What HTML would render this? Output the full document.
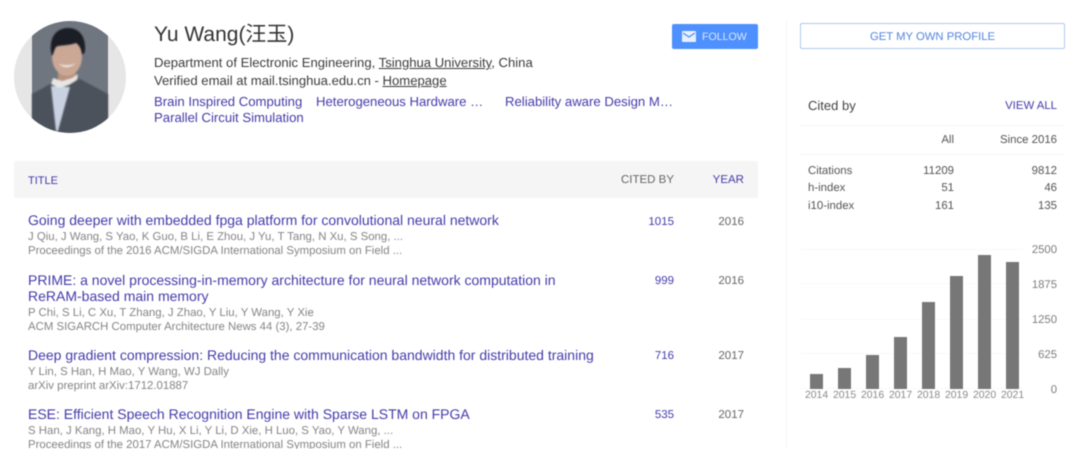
<!DOCTYPE html>
<html><head><meta charset="utf-8">
<style>
html,body{margin:0;padding:0;background:#fff}
#p{position:relative;width:1080px;height:449px;overflow:hidden;background:#fff;font-family:"Liberation Sans","Noto Sans CJK SC",sans-serif;filter:blur(.4px);text-rendering:geometricPrecision}
#p div.t{position:absolute;white-space:nowrap;line-height:16px;height:16px}
.l{color:#453baa}
.g{color:#858585;font-size:11.4px}
.r{text-align:right}
.h{font-size:14px;color:#453baa}
.s{font-size:11.4px;color:#555}
.y{font-size:10.4px;color:#8a8a8a}
.a{font-size:11.3px;color:#7d7d7d}
.kw{font-size:13.15px}
</style></head><body><div id="p">

<svg style="position:absolute;left:14px;top:21px" width="112" height="112" viewBox="0 0 112 112">
<defs><clipPath id="c"><circle cx="56" cy="56" r="56"/></clipPath></defs>
<g clip-path="url(#c)">
<rect width="112" height="112" fill="#e6e6e6"/>
<rect x="18" y="0" width="76" height="112" fill="#6f7680"/>
<g style="filter:blur(.8px)">
<rect x="44" y="48" width="18" height="14" fill="#b8937f"/>
<path d="M18 73 L38 62 L66 58 L94 73 L94 112 L18 112Z" fill="#4c525b"/>
<path d="M37 65 L56 66 L44 110 L42 110Z" fill="#c9d2e2"/>
<path d="M39 57 L37 63 L45 67 L55 64 L63 59 L64 53 L58 57 L48 60Z" fill="#e8e6e4"/>
<ellipse cx="53" cy="36" rx="15" ry="19" fill="#cba895"/>
<path d="M37 31 C35 12 46 7 54 7 C66 7 72 16 71 30 C70 33 69 34 68 33 C67 27 65 24 62 22 C54 25 44 24 42 26 C40 29 40 32 38 35Z" fill="#1b1e25"/>
<path d="M45 43 Q53 50 62 42 Q54 46 45 43Z" fill="#f1ece7"/>
</g>
</g></svg>

<div class="t" style="left:154px;top:23px;font-size:21px;line-height:24px;height:24px;color:#333">Yu Wang(汪玉)</div>
<div class="t" style="left:154px;top:55px;font-size:13.1px;color:#3c3c3c">Department of Electronic Engineering, <u>Tsinghua University</u>, China</div>
<div class="t" style="left:154px;top:73px;font-size:13.1px;color:#3c3c3c">Verified email at mail.tsinghua.edu.cn - <u>Homepage</u></div>
<div class="t l kw" style="left:154px;top:94px">Brain Inspired Computing</div>
<div class="t l kw" style="left:316px;top:94px">Heterogeneous Hardware …</div>
<div class="t l kw" style="left:505px;top:94px">Reliability aware Design M…</div>
<div class="t l kw" style="left:154px;top:110px">Parallel Circuit Simulation</div>

<div style="position:absolute;left:672px;top:24px;width:86px;height:25px;background:#4d90fe;border-radius:2px"></div>
<svg style="position:absolute;left:682px;top:31px" width="14" height="11" viewBox="0 0 14 11"><rect width="14" height="11" rx="1" fill="#e8f0fe"/><path d="M1 2 L7 6 L13 2" fill="none" stroke="#4d90fe" stroke-width="1.3"/></svg>
<div class="t" style="left:702px;top:29px;font-size:10.6px;color:#dbe8fd">FOLLOW</div>

<div style="position:absolute;left:786px;top:20px;width:1px;height:429px;background:#f5f5f5"></div>
<div style="position:absolute;left:800px;top:23px;width:263px;height:24px;border:1px solid #aec6f3;border-radius:2px"></div>
<div class="t" style="left:800px;top:29px;width:265px;text-align:center;font-size:11.3px;color:#5585dc">GET MY OWN PROFILE</div>

<div class="t" style="left:808px;top:98px;font-size:13px;color:#444">Cited by</div>
<div class="t r l" style="right:23px;top:98px;font-size:11.4px">VIEW ALL</div>
<div style="position:absolute;left:800px;top:125px;width:265px;height:1px;background:#f6f6f6"></div>
<div class="t r s" style="right:126px;top:132px">All</div>
<div class="t r s" style="right:23px;top:132px">Since 2016</div>
<div style="position:absolute;left:800px;top:154px;width:265px;height:1px;background:#f6f6f6"></div>

<div class="t s" style="left:808px;top:163px">Citations</div><div class="t r s" style="right:126px;top:163px">11209</div><div class="t r s" style="right:23px;top:163px">9812</div>
<div class="t s" style="left:808px;top:180px">h-index</div><div class="t r s" style="right:126px;top:180px">51</div><div class="t r s" style="right:23px;top:180px">46</div>
<div class="t s" style="left:808px;top:198px">i10-index</div><div class="t r s" style="right:126px;top:198px">161</div><div class="t r s" style="right:23px;top:198px">135</div>

<svg style="position:absolute;left:0;top:0" width="1080" height="449">
<g fill="#f8f8f8"><rect x="800" y="249" width="223" height="1"/><rect x="800" y="283" width="223" height="1"/><rect x="800" y="319" width="223" height="1"/><rect x="800" y="353" width="223" height="1"/><rect x="800" y="388" width="223" height="1"/></g>
<g fill="#777">
<rect x="810" y="374" width="13" height="15"/>
<rect x="838" y="368" width="13" height="21"/>
<rect x="866" y="355" width="13" height="34"/>
<rect x="894" y="337" width="13" height="52"/>
<rect x="922" y="302" width="13" height="87"/>
<rect x="950" y="276" width="13" height="113"/>
<rect x="978" y="255" width="13" height="134"/>
<rect x="1006" y="262" width="13" height="127"/>
</g></svg>
<div class="t y" style="left:805px;top:388px">2014</div>
<div class="t y" style="left:833px;top:388px">2015</div>
<div class="t y" style="left:861px;top:388px">2016</div>
<div class="t y" style="left:889px;top:388px">2017</div>
<div class="t y" style="left:917px;top:388px">2018</div>
<div class="t y" style="left:945px;top:388px">2019</div>
<div class="t y" style="left:973px;top:388px">2020</div>
<div class="t y" style="left:1001px;top:388px">2021</div>
<div class="t r a" style="right:23px;top:242px">2500</div>
<div class="t r a" style="right:23px;top:277px">1875</div>
<div class="t r a" style="right:23px;top:312px">1250</div>
<div class="t r a" style="right:23px;top:347px">625</div>
<div class="t r a" style="right:23px;top:382px">0</div>

<div style="position:absolute;left:14px;top:161px;width:744px;height:37px;background:#f5f5f5;border-radius:2px"></div>
<div class="t l" style="left:28px;top:173px;font-size:11px">TITLE</div>
<div class="t r" style="right:406px;top:172px;font-size:11.5px;color:#666">CITED BY</div>
<div class="t r l" style="right:336px;top:172px;font-size:11.5px">YEAR</div>

<div class="t h" style="left:28px;top:212px">Going deeper with embedded fpga platform for convolutional neural network</div>
<div class="t g" style="left:28px;top:229px">J Qiu, J Wang, S Yao, K Guo, B Li, E Zhou, J Yu, T Tang, N Xu, S Song, ...</div>
<div class="t g" style="left:28px;top:243px">Proceedings of the 2016 ACM/SIGDA International Symposium on Field ...</div>
<div class="t r l" style="right:406px;top:214px;font-size:11.5px">1015</div>
<div class="t r" style="right:336px;top:214px;font-size:11.5px;color:#666">2016</div>

<div class="t h" style="left:28px;top:272px">PRIME: a novel processing-in-memory architecture for neural network computation in</div>
<div class="t h" style="left:28px;top:288px">ReRAM-based main memory</div>
<div class="t g" style="left:28px;top:305px">P Chi, S Li, C Xu, T Zhang, J Zhao, Y Liu, Y Wang, Y Xie</div>
<div class="t g" style="left:28px;top:319px">ACM SIGARCH Computer Architecture News 44 (3), 27-39</div>
<div class="t r l" style="right:406px;top:273px;font-size:11.5px">999</div>
<div class="t r" style="right:336px;top:273px;font-size:11.5px;color:#666">2016</div>

<div class="t h" style="left:28px;top:347px">Deep gradient compression: Reducing the communication bandwidth for distributed training</div>
<div class="t g" style="left:28px;top:364px">Y Lin, S Han, H Mao, Y Wang, WJ Dally</div>
<div class="t g" style="left:28px;top:378px">arXiv preprint arXiv:1712.01887</div>
<div class="t r l" style="right:406px;top:348px;font-size:11.5px">716</div>
<div class="t r" style="right:336px;top:348px;font-size:11.5px;color:#666">2017</div>

<div class="t h" style="left:28px;top:406px">ESE: Efficient Speech Recognition Engine with Sparse LSTM on FPGA</div>
<div class="t g" style="left:28px;top:423px">S Han, J Kang, H Mao, Y Hu, X Li, Y Li, D Xie, H Luo, S Yao, Y Wang, ...</div>
<div class="t g" style="left:28px;top:437px">Proceedings of the 2017 ACM/SIGDA International Symposium on Field ...</div>
<div class="t r l" style="right:406px;top:407px;font-size:11.5px">535</div>
<div class="t r" style="right:336px;top:407px;font-size:11.5px;color:#666">2017</div>

</div></body></html>
